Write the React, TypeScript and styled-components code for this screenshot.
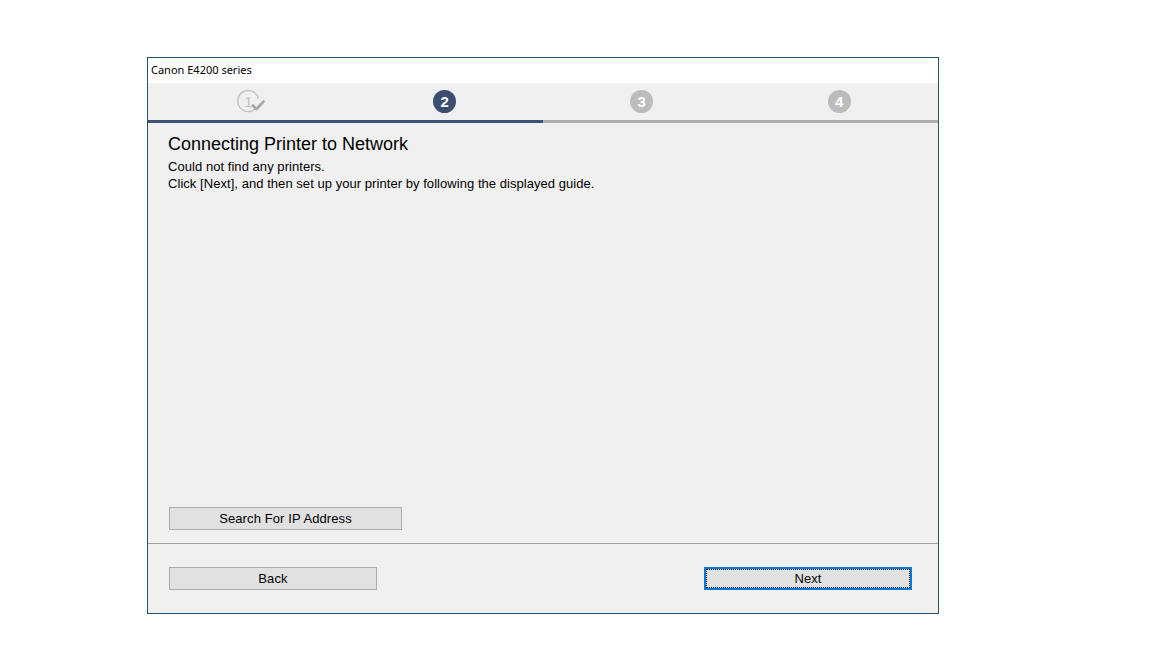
import React from "react";
import styled, { createGlobalStyle } from "styled-components";

const Global = createGlobalStyle`
  html, body { margin: 0; padding: 0; background: #ffffff; }
  body { font-family: "Liberation Sans", Arial, sans-serif; }
`;

const Page = styled.div`
  padding: 57px 0 0 147px;
`;

const Window = styled.div`
  box-sizing: border-box;
  width: 792px;
  height: 557px;
  border: 1px solid #27506e;
  background: #f0f0f0;
  display: flex;
  flex-direction: column;
`;

const TitleBar = styled.div`
  height: 25px;
  background: #ffffff;
  display: flex;
  align-items: center;
  padding-left: 3px;
  padding-bottom: 2px;
  box-sizing: border-box;
  font-family: "Noto Sans", "Open Sans", sans-serif;
  font-size: 11px;
  color: #000;
`;

const StepBar = styled.div`
  height: 37px;
  display: grid;
  grid-template-columns: repeat(4, 1fr);
  align-items: center;
  justify-items: center;
`;

const Progress = styled.div`
  height: 3px;
  display: grid;
  grid-template-columns: 1fr 1fr;
`;

const ProgressPart = styled.div<{ $done?: boolean }>`
  background: ${(p) => (p.$done ? "#3d5373" : "#adadad")};
`;

const StepCircle = styled.div<{ $active?: boolean }>`
  width: 23px;
  height: 23px;
  border-radius: 50%;
  background: ${(p) => (p.$active ? "#3b4e6f" : "#bcbcbc")};
  color: #fff;
  font-family: "Liberation Sans", Arial, sans-serif;
  font-weight: bold;
  font-size: 15px;
  display: flex;
  align-items: center;
  justify-content: center;
  margin-left: ${(p) => (p.$active ? "1px" : "0px")};
`;

const DoneIcon = styled.svg`
  width: 30px;
  height: 26px;
  margin-left: 11px;
  margin-top: 1px;
`;

const Content = styled.div`
  flex: 1;
  display: flex;
  flex-direction: column;
  align-items: flex-start;
  padding: 11px 20px 13px 20px;
`;

const Heading = styled.h1`
  margin: 0 0 4px 0;
  font-family: "Liberation Sans", Arial, sans-serif;
  font-weight: normal;
  font-size: 18px;
  line-height: 20px;
  color: #000;
`;

const Message = styled.p`
  margin: 0;
  font-size: 13px;
  line-height: 17px;
  color: #000;
  letter-spacing: 0.05px;
`;

const Spacer = styled.div`
  flex: 1;
`;

const Button = styled.button<{ $width: number; $focused?: boolean; $indent?: number }>`
  box-sizing: border-box;
  width: ${(p) => p.$width}px;
  height: 23px;
  margin-left: ${(p) => p.$indent ?? 0}px;
  background: #e1e1e1;
  border: ${(p) => (p.$focused ? "2px solid #0078d7" : "1px solid #adadad")};
  font-family: "Liberation Sans", Arial, sans-serif;
  font-size: 13px;
  color: #000;
  padding: 0;
  display: flex;
  align-items: center;
  justify-content: center;
  outline: ${(p) => (p.$focused ? "1px dotted #000" : "none")};
  outline-offset: ${(p) => (p.$focused ? "-3px" : "0")};
  letter-spacing: 0.1px;
`;

const Separator = styled.div`
  height: 1px;
  background: #a0a0a0;
`;

const Footer = styled.div`
  height: 69px;
  display: flex;
  align-items: flex-start;
  justify-content: space-between;
  padding: 23px 26px 0 21px;
  box-sizing: border-box;
`;

export default function App() {
  return (
    <>
      <Global />
      <Page>
        <Window>
          <TitleBar>Canon E4200 series</TitleBar>
          <StepBar>
            <DoneIcon viewBox="0 0 30 26">
              <path
                d="M19.5 18.5 A10.5 10.5 0 1 1 21.5 10"
                fill="none"
                stroke="#c4c4c4"
                strokeWidth="1.5"
              />
              <text
                x="11.5"
                y="17.5"
                textAnchor="middle"
                fontFamily="Liberation Sans, Arial, sans-serif"
                fontSize="14"
                fill="#c0c0c0"
              >
                1
              </text>
              <path
                d="M16 16.5 L19.5 20 L26.5 12.5"
                fill="none"
                stroke="#a8a8a8"
                strokeWidth="2.6"
                strokeLinecap="round"
                strokeLinejoin="round"
              />
            </DoneIcon>
            <StepCircle $active>2</StepCircle>
            <StepCircle>3</StepCircle>
            <StepCircle>4</StepCircle>
          </StepBar>
          <Progress>
            <ProgressPart $done />
            <ProgressPart />
          </Progress>
          <Content>
            <Heading>Connecting Printer to Network</Heading>
            <Message>Could not find any printers.</Message>
            <Message>Click [Next], and then set up your printer by following the displayed guide.</Message>
            <Spacer />
            <Button $width={233} $indent={1}>Search For IP Address</Button>
          </Content>
          <Separator />
          <Footer>
            <Button $width={208}>Back</Button>
            <Button $width={208} $focused>Next</Button>
          </Footer>
        </Window>
      </Page>
    </>
  );
}
